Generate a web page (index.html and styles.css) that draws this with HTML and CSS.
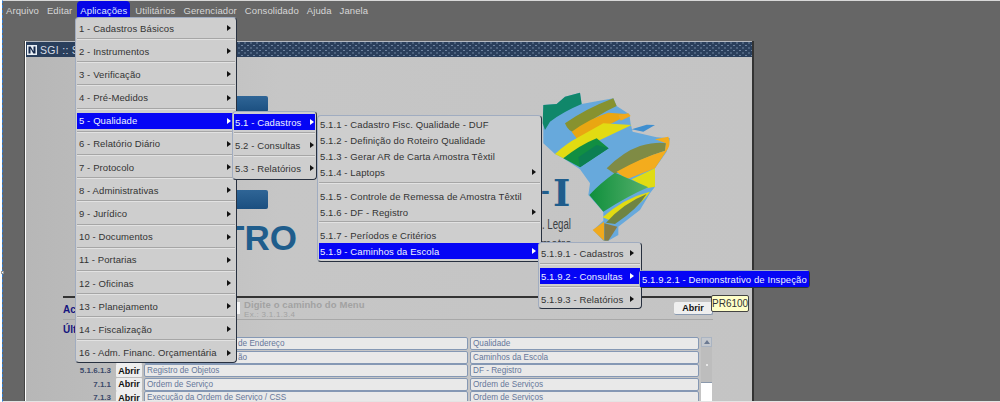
FILE: index.html
```html
<!DOCTYPE html>
<html lang="pt">
<head>
<meta charset="utf-8">
<title>SGI</title>
<link rel="stylesheet" href="styles.css">
</head>
<body>
<div class="page">
  <nav class="bar">
    <span class="bar-item">Arquivo</span>
    <span class="bar-item">Editar</span>
    <span class="bar-item active">Aplicações</span>
    <span class="bar-item">Utilitários</span>
    <span class="bar-item">Gerenciador</span>
    <span class="bar-item">Consolidado</span>
    <span class="bar-item">Ajuda</span>
    <span class="bar-item">Janela</span>
  </nav>
  <section class="window">
    <header class="title">
      <svg class="title-icon" viewBox="0 0 10 10"><rect width="10" height="10" fill="#e8eef5"/><path d="M1.5 1.500h2.200l2.800 5v-5h2v7H6.300l-2.800-5v5h-2z" fill="#14284a"/></svg>
      <span class="title-text">SGI :: S</span>
      <span class="title-dots"></span>
    </header>
    <div class="hero">
      <svg class="logo" viewBox="26 57 726 239" width="726" height="239">
        <defs>
          <linearGradient id="bar" x1="0" x2="0" y1="0" y2="1"><stop offset="0" stop-color="#2f6596"/><stop offset="1" stop-color="#1b4f80"/></linearGradient>
          <linearGradient id="gr" x1="0" x2="1" y1="0" y2="0"><stop offset="0" stop-color="#0f8f3c"/><stop offset="1" stop-color="#56b06c"/></linearGradient>
        </defs>
        <rect x="225" y="96" width="43" height="16" rx="2" fill="url(#bar)"/>
        <rect x="225" y="190" width="43" height="19" rx="2" fill="url(#bar)"/>
        <text x="297" y="250" class="logo-tro">TRO</text>
        <text x="541" y="199" class="logo-dash">-</text>
        <text x="553" y="206" class="logo-i">I</text>
        <text x="542" y="229" class="logo-legal" textLength="29" lengthAdjust="spacingAndGlyphs">. Legal</text>
        <text x="541" y="248" class="logo-metro">metro</text>
        <g class="map" transform="translate(500 80) scale(.3333)">
          <path fill="#67a9dc" d="M130 75 170 72 195 50 240 38 245 72 340 55 350 78 388 103 392 132 398 155 470 172 510 175 500 215 465 265 465 320 450 340 420 390 355 440 355 465 325 482 310 482 280 450 310 422 310 395 265 345 270 310 240 268 190 235 165 222 130 190Z"/>
          <path fill="#10876a" d="M130 75 170 72 195 50 240 38 245 72Q190 95 150 125L135 150 128 130Z"/>
          <path fill="#87922f" d="M195 130Q260 85 340 55L350 78Q290 105 225 158 205 155 195 130Z"/>
          <path fill="#e9a612" d="M215 155Q270 115 325 98L388 103 345 125Q290 150 240 188Z"/>
          <path fill="#e2db12" d="M165 222Q200 190 235 172L310 130 395 135 300 180Q240 205 190 235Z"/>
          <path fill="#118e42" d="M190 235Q240 195 290 175L326 205 240 262Z"/>
          <path fill="#0c7f52" d="M235 232 290 195 326 205 240 262Z"/>
          <path fill="#7f8b45" d="M320 265Q370 215 420 198 470 185 498 190L495 212Q420 235 345 282Z"/>
          <path fill="#f3ac1d" d="M465 178 505 170Q515 195 498 215L465 265 380 298 350 275Q420 235 495 212L498 190Z"/>
          <path fill="#e0dc14" d="M395 298 465 265 465 320 440 325Z"/>
          <path fill="url(#gr)" d="M268 345Q300 310 345 278L445 322Q390 345 310 395Z"/>
          <path fill="#e2db12" d="M308 412Q370 355 450 335 425 375 340 425Z"/>
          <path fill="#6f8443" d="M318 428Q370 370 440 342 415 385 345 432Z"/>
          <path fill="#f0a91d" d="M278 450 312 425 312 482Z"/>
          <path fill="#877d46" d="M313 430 352 440 325 482 313 482Z"/>
          <path fill="#3f8fd0" d="M395 148 440 134 465 135 430 155Z"/>
          <path fill="#f0a91d" d="M355 105 385 100 392 108 362 122Z"/>
        </g>
      </svg>
    </div>
    <div class="access">
      <strong class="access-label">Ac</strong>
      <span class="access-input"></span>
      <div class="hint">
        <span class="hint-main">Digite o caminho do Menu</span>
        <span class="hint-sub">Ex.: 3.1.1.3.4</span>
      </div>
      <button class="open-main">Abrir</button>
    </div>
    <div class="recent"><strong>Últ</strong></div>
    <div class="table">
      <div class="rows">
        <div class="row"><span class="code"></span><span class="open"></span><span class="field shift">de Endereço</span><span class="field">Qualidade</span></div>
        <div class="row"><span class="code"></span><span class="open"></span><span class="field shift">ão</span><span class="field">Caminhos da Escola</span></div>
        <div class="row"><span class="code">5.1.6.1.3</span><button class="open">Abrir</button><span class="field">Registro de Objetos</span><span class="field">DF - Registro</span></div>
        <div class="row"><span class="code">7.1.1</span><button class="open">Abrir</button><span class="field">Ordem de Serviço</span><span class="field">Ordem de Serviços</span></div>
        <div class="row"><span class="code">7.1.3</span><button class="open">Abrir</button><span class="field">Execução da Ordem de Serviço / CSS</span><span class="field">Ordem de Serviços</span></div>
      </div>
      <div class="scroll">
        <span class="scroll-up"></span>
        <span class="scroll-thumb"></span>
      </div>
    </div>
  </section>
</div>

<div class="menu menu-main">
  <div class="item sub">1 - Cadastros Básicos</div><hr class="sep">
  <div class="item sub">2 - Instrumentos</div><hr class="sep">
  <div class="item sub">3 - Verificação</div><hr class="sep">
  <div class="item sub">4 - Pré-Medidos</div><hr class="sep">
  <div class="item sub sel">5 - Qualidade</div><hr class="sep">
  <div class="item sub">6 - Relatório Diário</div><hr class="sep">
  <div class="item sub">7 - Protocolo</div><hr class="sep">
  <div class="item sub">8 - Administrativas</div><hr class="sep">
  <div class="item sub">9 - Jurídico</div><hr class="sep">
  <div class="item sub">10 - Documentos</div><hr class="sep">
  <div class="item sub">11 - Portarias</div><hr class="sep">
  <div class="item sub">12 - Oficinas</div><hr class="sep">
  <div class="item sub">13 - Planejamento</div><hr class="sep">
  <div class="item sub">14 - Fiscalização</div><hr class="sep">
  <div class="item sub">16 - Adm. Financ. Orçamentária</div>
</div>

<div class="menu menu-q">
  <div class="item sub sel">5.1 - Cadastros</div><hr class="sep">
  <div class="item sub">5.2 - Consultas</div><hr class="sep">
  <div class="item sub">5.3 - Relatórios</div>
</div>

<div class="menu menu-c">
  <div class="item">5.1.1 - Cadastro Fisc. Qualidade - DUF</div>
  <div class="item">5.1.2 - Definição do Roteiro Qualidade</div>
  <div class="item">5.1.3 - Gerar AR de Carta Amostra Têxtil</div>
  <div class="item sub">5.1.4 - Laptops</div><hr class="sep sep-wide">
  <div class="item">5.1.5 - Controle de Remessa de Amostra Têxtil</div>
  <div class="item sub">5.1.6 - DF - Registro</div><hr class="sep sep-tight">
  <div class="item">5.1.7 - Períodos e Critérios</div>
  <div class="item sub sel">5.1.9 - Caminhos da Escola</div>
</div>

<div class="menu menu-e">
  <div class="item sub">5.1.9.1 - Cadastros</div><hr class="sep">
  <div class="item sub sel">5.1.9.2 - Consultas</div><hr class="sep">
  <div class="item sub">5.1.9.3 - Relatórios</div>
</div>

<div class="menu menu-d">
  <div class="item sel">5.1.9.2.1 - Demonstrativo de Inspeção</div>
</div>

<div class="tip">PR6100</div>
<span class="handle"></span>
</body>
</html>
```

FILE: styles.css
```css
* { box-sizing: border-box; }
html, body { margin: 0; padding: 0; background: #fff; }
body {
  position: relative;
  width: 1000px;
  height: 402px;
  overflow: hidden;
  font-family: "Liberation Sans", Arial, sans-serif;
}
.page {
  display: flex;
  flex-direction: column;
  margin-left: 2px;
  height: 402px;
  background: #666;
  border-top: 1px solid #d8d8d8;
  border-bottom: 1px solid #e4e4e4;
  border-left: 1px dashed #2f7fd6;
}
.bar {
  display: flex;
  height: 18px;
  flex: none;
}
.bar-item {
  padding: 0 3px;
  margin-right: 2px;
  font-size: 9.5px;
  line-height: 19px;
  letter-spacing: .1px;
  color: #d6d6d6;
}
.bar-item.active {
  background: #0505e6;
  color: #dfe6ff;
  border-radius: 4px 4px 0 0;
}
.window {
  flex: 1;
  min-height: 0;
  overflow: hidden;
  margin: 22px 0 0 22px;
  width: 729px;
  background: linear-gradient(90deg, #b7b7b7, #c6c6c6 35%, #c4c4c4);
  border-left: 1px solid #e8e8e8;
  border-right: 2px solid;
  border-image: linear-gradient(90deg, #fff 50%, #333 50%) 1;
  border-top: 0;
  border-bottom: 0;
  box-shadow: -1px 0 0 #444;
}
.title {
  display: flex;
  align-items: center;
  height: 16px;
  padding-left: 1px;
  background: #2a3f5c;
  border-top: 1px solid #b5b9c0;
  color: #d6dde6;
  font-size: 10.5px;
}
.title-icon { width: 10px; height: 10px; margin-right: 3px; flex: none; }
.title-text { letter-spacing: .3px; margin-right: 4px; }
.title-dots {
  flex: 1;
  align-self: stretch;
  background-image:
    radial-gradient(circle at center, #6f84a0 0, #6f84a0 .5px, transparent 1px),
    radial-gradient(circle at center, #6f84a0 0, #6f84a0 .5px, transparent 1px);
  background-size: 6px 5px;
  background-position: 0 1px, 3px 3.5px;
}
.hero { height: 239px; }
.logo { display: block; }
.logo-tro { font: bold 35px "Liberation Sans", sans-serif; fill: #1f5d8c; text-anchor: end; }
.logo-dash { font: bold 26px "Liberation Sans", sans-serif; fill: #1f5d8c; }
.logo-i { font: bold 37px "DejaVu Serif", serif; fill: #1f5d8c; }
.logo-legal { font: 14px "Liberation Sans", sans-serif; fill: #3a3f44; }
.logo-metro { font: 12px "Liberation Sans", sans-serif; fill: #3a3f44; }
.map { filter: blur(.6px); }
.access {
  display: flex;
  align-items: flex-start;
  height: 24px;
  margin-left: 37px;
  width: 650px;
  padding-top: 4px;
  border-top: 2px solid #333;
  border-bottom: 1px solid #a8a8a8;
}
.access-label {
  font-size: 10px;
  line-height: 14px;
  padding-top: 1px;
  color: #14147e;
  width: 160px;
}
.access-input {
  width: 17px;
  height: 12px;
  background: #f4f4f4;
  margin-right: 4px;
}
.hint { display: flex; flex-direction: column; margin-top: -2px; }
.hint-main {
  font-size: 9.5px;
  font-weight: bold;
  line-height: 10px;
  letter-spacing: .1px;
  color: #a2a2a2;
}
.hint-sub {
  font-size: 8px;
  line-height: 10px;
  letter-spacing: .3px;
  color: #a2a2a2;
}
.open-main {
  margin-left: auto;
  width: 39px;
  height: 13px;
  padding: 0;
  border: 0;
  border-radius: 2px;
  border-right: 1px solid #8a9ab0;
  border-bottom: 1px solid #8a9ab0;
  background: #efefef;
  color: #111;
  font: bold 9px "Liberation Sans", sans-serif;
}
.recent {
  height: 17px;
  margin-left: 37px;
  font-size: 10px;
  line-height: 20px;
  color: #14147e;
}
.table {
  display: flex;
  gap: 2px;
  margin-left: 37px;
  width: 650px;
  height: 70px;
}
.rows {
  display: flex;
  flex-direction: column;
  gap: 1px;
  width: 636px;
}
.row {
  display: grid;
  grid-template-columns: 51px 26px 324px 229px;
  column-gap: 2px;
  height: 12.5px;
  flex: none;
}
.code {
  font-size: 8px;
  font-weight: bold;
  line-height: 13px;
  text-align: right;
  color: #3c4a6a;
  margin-right: 3px;
}
.open {
  height: 13px;
  padding: 0;
  border: 0;
  border-radius: 1px;
  width: 26px;
  background: #eee;
  color: #111;
  font: bold 9px "Liberation Sans", sans-serif;
}
.field {
  overflow: hidden;
  padding-left: 2px;
  background: #e9e9e9;
  border: 1px solid #8598b4;
  border-radius: 2px;
  color: #66779a;
  font-size: 8.2px;
  line-height: 11px;
  white-space: nowrap;
}
.field.shift { padding-left: 93px; }
.scroll {
  display: flex;
  flex-direction: column;
  width: 11px;
  background: #fff;
}
.scroll-up {
  position: relative;
  height: 10px;
  background: #c4c8ce;
  border: 1px solid #aab4c2;
}
.scroll-up::after {
  content: "";
  position: absolute;
  left: 2px;
  top: 2px;
  border: 3px solid transparent;
  border-top: 0;
  border-bottom: 4px solid #6c7a92;
}
.scroll-thumb {
  height: 36px;
  background:
    radial-gradient(circle at center, #e8e8e8 0, #e8e8e8 .7px, transparent 1px) center / 6px 6px no-repeat,
    #bdbdbd;
  border-bottom: 1px solid #8a98ac;
}

.menu {
  position: absolute;
  padding: 2px 1px;
  background: #cecece;
  border: 1px solid #a0acc0;
  border-right-color: #27303f;
  border-bottom-color: #27303f;
  border-radius: 4px;
  font-size: 9.5px;
  letter-spacing: .1px;
  color: #333;
}
.menu-main { left: 75px; top: 17px; width: 162px; height: 346px; }
.menu-q { left: 232px; top: 111px; width: 85px; height: 69px; }
.menu-c { left: 317px; top: 115px; width: 225px; height: 147px; padding-top: 0; }
.menu-e { left: 538px; top: 242px; width: 104px; height: 67px; }
.menu-d { left: 639px; top: 270px; width: 171px; height: 18px; padding: 0; background: #0505f5; }
.item {
  display: flex;
  align-items: center;
  height: 16px;
  padding-left: 1px;
  white-space: nowrap;
}
.menu-main .item, .menu-d .item { padding-left: 2px; }
.item.sub::after {
  content: "";
  margin-left: auto;
  margin-right: 4px;
  border-left: 4px solid #111;
  border-top: 3px solid transparent;
  border-bottom: 3px solid transparent;
}
.menu-q .item.sub::after { margin-right: 1px; }
.menu-e .item.sub::after { margin-right: 6px; }
.item.sel { background: #0505f5; color: #eef2ff; }
.item.sel.sub::after { border-left-color: #fff; }
.sep {
  height: 2px;
  margin: 2px 0 3.2px;
  border: 0;
  border-top: 1px solid #a6a6a6;
  border-bottom: 1px solid #e2e2e2;
}
.sep-wide { margin: 2px 0 4px; }
.sep-tight { margin: 1px 0 4px; }
.tip {
  position: absolute;
  left: 711px;
  top: 295px;
  width: 38px;
  height: 17px;
  background: #ffffc8;
  border: 1px solid #444;
  border-radius: 2px;
  color: #333;
  font-size: 10px;
  line-height: 15px;
  text-align: center;
}
.handle {
  position: absolute;
  left: 1px;
  top: 271px;
  width: 3px;
  height: 3px;
  background: #fff;
  border: 1px solid #999;
}
```
